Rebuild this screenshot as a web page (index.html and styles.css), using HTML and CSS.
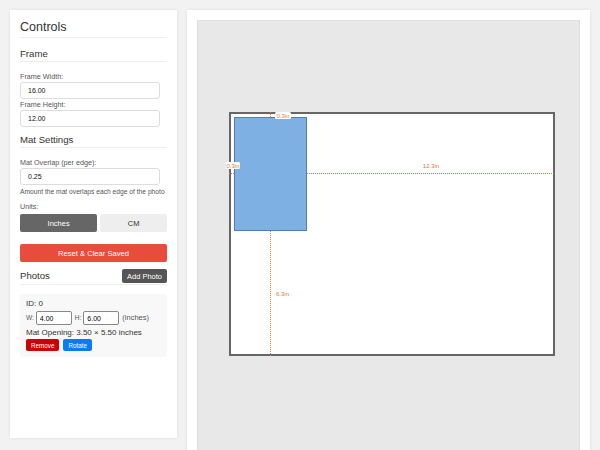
FILE: index.html
```html
<!DOCTYPE html>
<html lang="en">
<head>
    <meta charset="UTF-8">
    <meta name="viewport" content="width=device-width, initial-scale=1.0">
    <title>Mat Planner</title>

    <link rel="stylesheet" href="styles.css">
</head>
<body>
    <div class="controls panel">
        <h2>Controls</h2>

        <h3>Frame</h3>
        <label class="field-label">Frame Width:</label>
        <input class="field" type="text" value="16.00">
        <label class="field-label">Frame Height:</label>
        <input class="field" type="text" value="12.00">

        <h3>Mat Settings</h3>
        <label class="field-label spaced">Mat Overlap (per edge):</label>
        <input class="field" type="text" value="0.25">
        <p class="hint">Amount the mat overlaps each edge of the photo</p>

        <label class="field-label units-label">Units:</label>
        <div class="units">
            <button class="unit active">Inches</button>
            <button class="unit">CM</button>
        </div>

        <button class="reset">Reset &amp; Clear Saved</button>

        <div class="photos-header">
            <h3>Photos</h3>
            <button class="add-photo">Add Photo</button>
        </div>

        <div class="photo-card">
            <div class="photo-id">ID: 0</div>
            <div class="photo-size">
                <span class="small-label">W:</span>
                <input class="size-input" type="text" value="4.00">
                <span class="small-label">H:</span>
                <input class="size-input" type="text" value="6.00">
                <span class="unit-note">(inches)</span>
            </div>
            <div class="photo-opening">Mat Opening: 3.50 × 5.50 inches</div>
            <div class="photo-actions">
                <button class="mini remove">Remove</button>
                <button class="mini rotate">Rotate</button>
            </div>
        </div>
    </div>

    <div class="preview panel">
        <div class="canvas">
            <svg class="layout" width="381" height="440" viewBox="0 0 381 440">
                <!-- frame -->
                <rect x="32" y="92" width="324" height="242" fill="#fff" stroke="#666" stroke-width="2"/>
                <!-- photo opening -->
                <rect x="36.5" y="96.5" width="72" height="113" fill="#7eb0e3" stroke="#4f7db5" stroke-width="1"/>

                <!-- distances to frame edges -->
                <g class="dim" stroke="#e07b39" stroke-width="1" stroke-dasharray="1 1" shape-rendering="crispEdges">
                    <line x1="72.5" y1="91" x2="72.5" y2="96"/>
                    <line x1="31" y1="152.5" x2="36" y2="152.5"/>
                    <line x1="109" y1="152.5" x2="357" y2="152.5"/>
                    <line x1="72.5" y1="210" x2="72.5" y2="335"/>
                </g>
                <rect x="77" y="91" width="16" height="7" rx="1.5" fill="#fff"/>
                <rect x="28" y="141" width="14" height="7" rx="1.5" fill="#fff"/>
                <g class="dim-text" fill="#e07a35" font-size="6">
                    <text x="85" y="97" text-anchor="middle">0.3in</text>
                    <text x="35" y="147" text-anchor="middle">0.3in</text>
                    <text x="233" y="147" text-anchor="middle">12.3in</text>
                    <text x="78" y="274.5">6.3in</text>
                </g>
            </svg>
        </div>
    </div>
</body>
</html>
```

FILE: styles.css
```css
html, body {
    height: 100%;
    overflow: hidden;
}
body {
    margin: 0;
    padding: 10px;
    box-sizing: border-box;
    display: flex;
    align-items: flex-start;
    gap: 10px;
    background-color: #f2f2f2;
    font-family: "Liberation Sans", Arial, sans-serif;
    color: #333;
}
.panel {
    background-color: #fff;
    box-shadow: 0 0 3px 0 rgba(0, 0, 0, 0.1);
    box-sizing: border-box;
}
.controls {
    width: 167px;
    height: 428px;
    padding: 10px;
}
.preview {
    flex: 1;
    height: 470px;
    padding: 10px;
}
.canvas {
    height: 100%;
    background-color: #e8e8e8;
    border: 1px solid #dedede;
    box-sizing: border-box;
}
.layout {
    display: block;
    font-family: "Liberation Sans", Arial, sans-serif;
}

h2 {
    margin: 0 0 10px;
    padding-bottom: 2px;
    font-size: 12.5px;
    line-height: 15px;
    font-weight: normal;
    border-bottom: 1px solid #eee;
}
h3 {
    margin: 7px 0 10px;
    padding-bottom: 1px;
    font-size: 9.6px;
    line-height: 12px;
    font-weight: normal;
    border-bottom: 1px solid #eee;
}
.field-label {
    display: block;
    font-size: 7.2px;
    line-height: 9px;
    color: #555;
    margin-bottom: 1px;
}
.field-label.spaced {
    margin-top: 1px;
}
.field {
    display: block;
    height: 17px;
    width: 140px;
    box-sizing: border-box;
    margin: 0 0 1px;
    padding: 0 7px;
    border: 1px solid #ddd;
    border-radius: 3px;
    font-family: inherit;
    font-size: 7px;
    color: #111;
}
.hint {
    margin: 3px 0 0;
    font-size: 6.7px;
    line-height: 8px;
    color: #555;
}
.units-label {
    margin-top: 6px;
    margin-bottom: 3px;
}
.units {
    display: flex;
    gap: 3px;
}
.unit {
    flex: auto;
    height: 18px;
    padding: 0;
    border: none;
    border-radius: 2px;
    background-color: #eee;
    color: #333;
    font-family: inherit;
    font-size: 7.5px;
}
.unit.active {
    background-color: #666;
    color: #fff;
}
.reset {
    display: block;
    width: 100%;
    margin-top: 12px;
    height: 18px;
    border: none;
    border-radius: 2px;
    background-color: #e74c3c;
    color: #fff;
    font-family: inherit;
    font-size: 7.6px;
}
.photos-header {
    margin-top: 7px;
    display: flex;
    justify-content: space-between;
    align-items: center;
    padding-bottom: 1px;
    border-bottom: 1px solid #eee;
}
.photos-header h3 {
    margin: 0;
    padding: 0;
    border: none;
}
.add-photo {
    height: 14px;
    padding: 0 5px;
    border: none;
    border-radius: 2px;
    background-color: #555;
    color: #fff;
    font-family: inherit;
    font-size: 7.5px;
}
.photo-card {
    margin-top: 9px;
    padding: 5px 6px 6px;
    background-color: #f8f8f8;
    border-radius: 3px;
    font-size: 8px;
    line-height: 10px;
    color: #333;
}
.photo-size {
    display: flex;
    align-items: center;
    margin-top: 2px;
}
.small-label {
    font-size: 6.5px;
    color: #555;
    margin-right: 2px;
}
.size-input {
    width: 36px;
    height: 14px;
    box-sizing: border-box;
    padding: 0 3px;
    margin-right: 3px;
    border: 1px solid #888;
    border-radius: 2px;
    font-family: inherit;
    font-size: 7px;
}
.unit-note {
    font-size: 7.5px;
    color: #555;
}
.photo-opening {
    margin-top: 3px;
}
.photo-actions {
    display: flex;
    gap: 4px;
    margin-top: 1px;
}
.mini {
    height: 12px;
    padding: 0 5px;
    border: none;
    border-radius: 2px;
    color: #fff;
    font-family: inherit;
    font-size: 6.3px;
}
.mini.remove {
    background-color: #cc0000;
}
.mini.rotate {
    background-color: #0a7cf0;
}
```
